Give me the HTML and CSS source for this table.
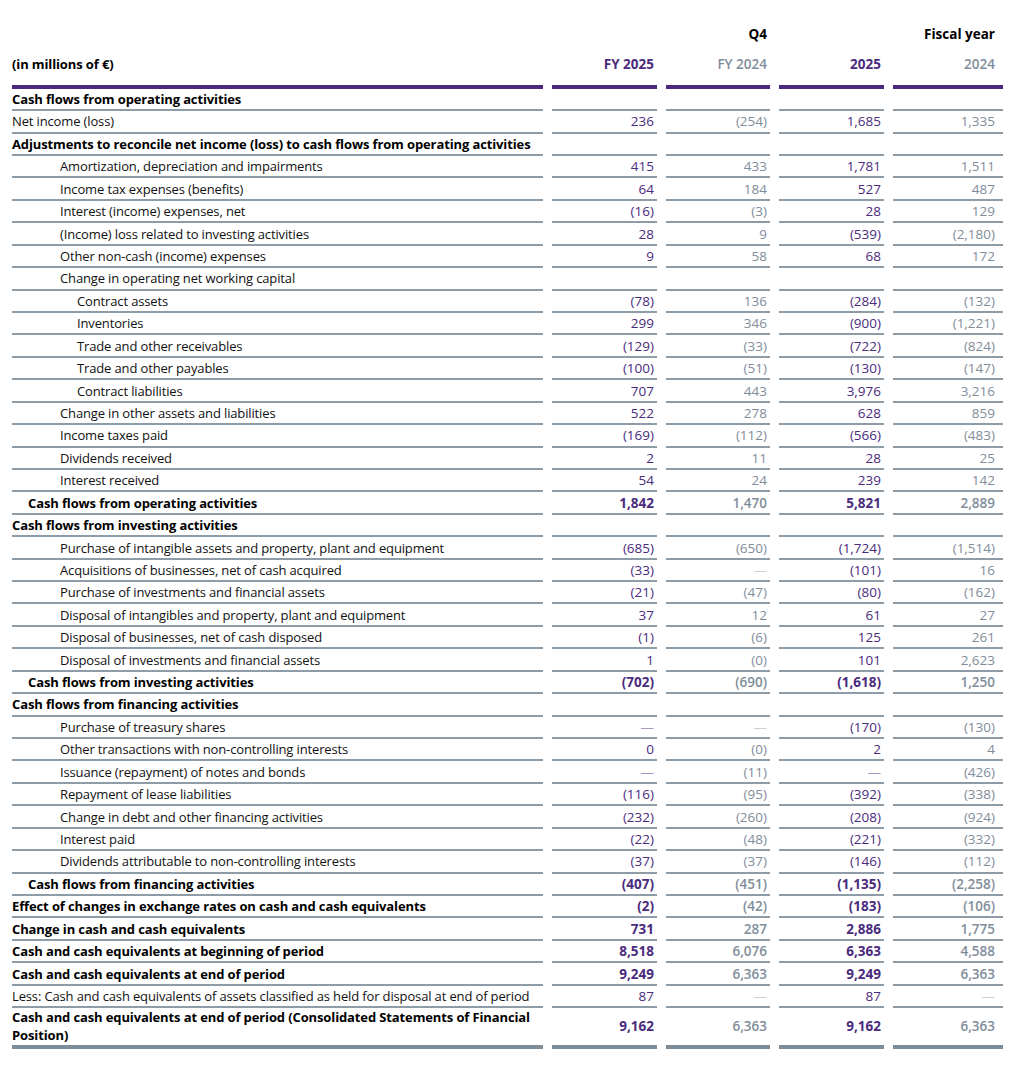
FILE: index.html
```html
<!DOCTYPE html>
<html lang="en">
<head>
<meta charset="utf-8">
<title>Cash flows</title>
<link rel="stylesheet" href="styles.css">
</head>
<body>
<table class="cf">
  <colgroup>
    <col class="c-label">
    <col class="c-num">
    <col class="c-num2">
    <col class="c-num">
    <col class="c-last">
  </colgroup>
  <thead>
    <tr class="hd1">
      <th class="lbl"></th>
      <th></th>
      <th class="num black">Q4</th>
      <th></th>
      <th class="num black last">Fiscal year</th>
    </tr>
    <tr class="hd2">
      <th class="lbl">(in millions of €)</th>
      <th class="num p">FY 2025</th>
      <th class="num g">FY 2024</th>
      <th class="num p">2025</th>
      <th class="num g last">2024</th>
    </tr>
  </thead>
  <tbody>
    <tr class="b"><td class="lbl">Cash flows from operating activities</td><td></td><td></td><td></td><td class="last"></td></tr>
    <tr><td class="lbl">Net income (loss)</td><td class="num p">236</td><td class="num g">(254)</td><td class="num p">1,685</td><td class="num g last">1,335</td></tr>
    <tr class="b"><td class="lbl">Adjustments to reconcile net income (loss) to cash flows from operating activities</td><td></td><td></td><td></td><td class="last"></td></tr>
    <tr><td class="lbl i2">Amortization, depreciation and impairments</td><td class="num p">415</td><td class="num g">433</td><td class="num p">1,781</td><td class="num g last">1,511</td></tr>
    <tr><td class="lbl i2">Income tax expenses (benefits)</td><td class="num p">64</td><td class="num g">184</td><td class="num p">527</td><td class="num g last">487</td></tr>
    <tr><td class="lbl i2">Interest (income) expenses, net</td><td class="num p">(16)</td><td class="num g">(3)</td><td class="num p">28</td><td class="num g last">129</td></tr>
    <tr><td class="lbl i2">(Income) loss related to investing activities</td><td class="num p">28</td><td class="num g">9</td><td class="num p">(539)</td><td class="num g last">(2,180)</td></tr>
    <tr><td class="lbl i2">Other non-cash (income) expenses</td><td class="num p">9</td><td class="num g">58</td><td class="num p">68</td><td class="num g last">172</td></tr>
    <tr><td class="lbl i2">Change in operating net working capital</td><td></td><td></td><td></td><td class="last"></td></tr>
    <tr><td class="lbl i3">Contract assets</td><td class="num p">(78)</td><td class="num g">136</td><td class="num p">(284)</td><td class="num g last">(132)</td></tr>
    <tr><td class="lbl i3">Inventories</td><td class="num p">299</td><td class="num g">346</td><td class="num p">(900)</td><td class="num g last">(1,221)</td></tr>
    <tr><td class="lbl i3">Trade and other receivables</td><td class="num p">(129)</td><td class="num g">(33)</td><td class="num p">(722)</td><td class="num g last">(824)</td></tr>
    <tr><td class="lbl i3">Trade and other payables</td><td class="num p">(100)</td><td class="num g">(51)</td><td class="num p">(130)</td><td class="num g last">(147)</td></tr>
    <tr><td class="lbl i3">Contract liabilities</td><td class="num p">707</td><td class="num g">443</td><td class="num p">3,976</td><td class="num g last">3,216</td></tr>
    <tr><td class="lbl i2">Change in other assets and liabilities</td><td class="num p">522</td><td class="num g">278</td><td class="num p">628</td><td class="num g last">859</td></tr>
    <tr><td class="lbl i2">Income taxes paid</td><td class="num p">(169)</td><td class="num g">(112)</td><td class="num p">(566)</td><td class="num g last">(483)</td></tr>
    <tr><td class="lbl i2">Dividends received</td><td class="num p">2</td><td class="num g">11</td><td class="num p">28</td><td class="num g last">25</td></tr>
    <tr><td class="lbl i2">Interest received</td><td class="num p">54</td><td class="num g">24</td><td class="num p">239</td><td class="num g last">142</td></tr>
    <tr class="b"><td class="lbl i1">Cash flows from operating activities</td><td class="num p">1,842</td><td class="num g">1,470</td><td class="num p">5,821</td><td class="num g last">2,889</td></tr>
    <tr class="b"><td class="lbl">Cash flows from investing activities</td><td></td><td></td><td></td><td class="last"></td></tr>
    <tr><td class="lbl i2">Purchase of intangible assets and property, plant and equipment</td><td class="num p">(685)</td><td class="num g">(650)</td><td class="num p">(1,724)</td><td class="num g last">(1,514)</td></tr>
    <tr><td class="lbl i2">Acquisitions of businesses, net of cash acquired</td><td class="num p">(33)</td><td class="num g nil">—</td><td class="num p">(101)</td><td class="num g last">16</td></tr>
    <tr><td class="lbl i2">Purchase of investments and financial assets</td><td class="num p">(21)</td><td class="num g">(47)</td><td class="num p">(80)</td><td class="num g last">(162)</td></tr>
    <tr><td class="lbl i2">Disposal of intangibles and property, plant and equipment</td><td class="num p">37</td><td class="num g">12</td><td class="num p">61</td><td class="num g last">27</td></tr>
    <tr><td class="lbl i2">Disposal of businesses, net of cash disposed</td><td class="num p">(1)</td><td class="num g">(6)</td><td class="num p">125</td><td class="num g last">261</td></tr>
    <tr><td class="lbl i2">Disposal of investments and financial assets</td><td class="num p">1</td><td class="num g">(0)</td><td class="num p">101</td><td class="num g last">2,623</td></tr>
    <tr class="b"><td class="lbl i1">Cash flows from investing activities</td><td class="num p">(702)</td><td class="num g">(690)</td><td class="num p">(1,618)</td><td class="num g last">1,250</td></tr>
    <tr class="b"><td class="lbl">Cash flows from financing activities</td><td></td><td></td><td></td><td class="last"></td></tr>
    <tr><td class="lbl i2">Purchase of treasury shares</td><td class="num p nil">—</td><td class="num g nil">—</td><td class="num p">(170)</td><td class="num g last">(130)</td></tr>
    <tr><td class="lbl i2">Other transactions with non-controlling interests</td><td class="num p">0</td><td class="num g">(0)</td><td class="num p">2</td><td class="num g last">4</td></tr>
    <tr><td class="lbl i2">Issuance (repayment) of notes and bonds</td><td class="num p nil">—</td><td class="num g">(11)</td><td class="num p nil">—</td><td class="num g last">(426)</td></tr>
    <tr><td class="lbl i2">Repayment of lease liabilities</td><td class="num p">(116)</td><td class="num g">(95)</td><td class="num p">(392)</td><td class="num g last">(338)</td></tr>
    <tr><td class="lbl i2">Change in debt and other financing activities</td><td class="num p">(232)</td><td class="num g">(260)</td><td class="num p">(208)</td><td class="num g last">(924)</td></tr>
    <tr><td class="lbl i2">Interest paid</td><td class="num p">(22)</td><td class="num g">(48)</td><td class="num p">(221)</td><td class="num g last">(332)</td></tr>
    <tr><td class="lbl i2">Dividends attributable to non-controlling interests</td><td class="num p">(37)</td><td class="num g">(37)</td><td class="num p">(146)</td><td class="num g last">(112)</td></tr>
    <tr class="b"><td class="lbl i1">Cash flows from financing activities</td><td class="num p">(407)</td><td class="num g">(451)</td><td class="num p">(1,135)</td><td class="num g last">(2,258)</td></tr>
    <tr class="b"><td class="lbl">Effect of changes in exchange rates on cash and cash equivalents</td><td class="num p">(2)</td><td class="num g">(42)</td><td class="num p">(183)</td><td class="num g last">(106)</td></tr>
    <tr class="b"><td class="lbl">Change in cash and cash equivalents</td><td class="num p">731</td><td class="num g">287</td><td class="num p">2,886</td><td class="num g last">1,775</td></tr>
    <tr class="b"><td class="lbl">Cash and cash equivalents at beginning of period</td><td class="num p">8,518</td><td class="num g">6,076</td><td class="num p">6,363</td><td class="num g last">4,588</td></tr>
    <tr class="b"><td class="lbl">Cash and cash equivalents at end of period</td><td class="num p">9,249</td><td class="num g">6,363</td><td class="num p">9,249</td><td class="num g last">6,363</td></tr>
    <tr><td class="lbl">Less: Cash and cash equivalents of assets classified as held for disposal at end of period</td><td class="num p">87</td><td class="num g nil">—</td><td class="num p">87</td><td class="num g last nil">—</td></tr>
    <tr class="b end"><td class="lbl wrap">Cash and cash equivalents at end of period (Consolidated Statements of Financial Position)</td><td class="num p">9,162</td><td class="num g">6,363</td><td class="num p">9,162</td><td class="num g last">6,363</td></tr>
  </tbody>
</table>
</body>
</html>
```

FILE: styles.css
```css
html, body {
  margin: 0;
  padding: 0;
  background: #ffffff;
}

body {
  font-family: "Open Sans", "Noto Sans", sans-serif;
  font-size: 13px;
  color: #000000;
}

.cf {
  table-layout: fixed;
  width: 1009px;
  border-collapse: separate;
  border-spacing: 9px 0;
  margin-left: 3px;
}

.c-label { width: 531px; }
.c-num { width: 105px; }
.c-num2 { width: 104px; }
.c-last { width: 110px; }

.cf th,
.cf td {
  padding: 2.3px 3px 0.7px 0;
  line-height: 17.43px;
  vertical-align: middle;
  font-weight: 400;
  white-space: nowrap;
}

.cf th.last,
.cf td.last {
  padding-right: 8px;
}

.cf th {
  font-weight: 700;
}

.hd1 th {
  padding-top: 26px;
  padding-bottom: 0;
}

.hd2 th {
  padding-top: 12.3px;
  padding-bottom: 11.6px;
  border-bottom: 4px solid #4b2a7e;
}

.lbl {
  text-align: left;
  letter-spacing: -0.14px;
  color: #111111;
}

.b .lbl,
th.lbl {
  letter-spacing: -0.12px;
  color: #000000;
}

.num {
  text-align: right;
  font-size: 13.5px;
}

.black { color: #000000; }

.p { color: #4a2b7d; }
.g { color: #7f8d9a; }

.hd2 th.g { font-weight: 600; }

.cf tbody td {
  border-bottom: 2px solid #8e9ca8;
}

.b td { font-weight: 700; }
.b td.g { font-weight: 600; }

.cf td.i1 { padding-left: 16px; }
.cf td.i2 { padding-left: 48px; }
.cf td.i3 { padding-left: 65px; }

.cf td.wrap {
  white-space: normal;
}

.nil.p { color: #a796c2; }
.nil.g { color: #c9d1d8; }

.cf tr.end td {
  border-bottom: 4px solid #7e8c98;
  padding-top: 1px;
  padding-bottom: 1px;
}
```
